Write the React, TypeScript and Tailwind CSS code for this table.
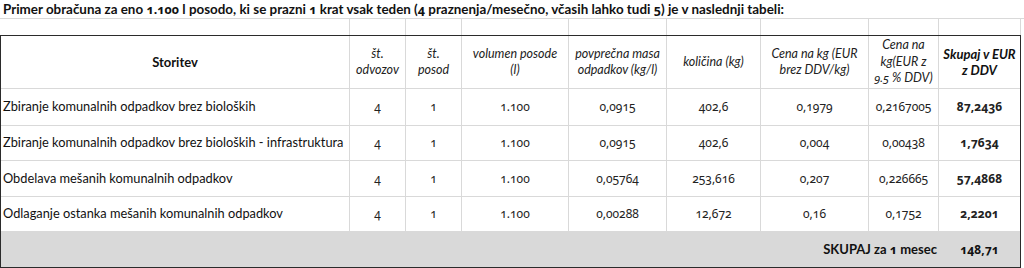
import React from 'react';

const cols = 'grid-cols-[349px_56px_56px_107px_98px_94px_108px_70px_81px]';

const rows = [
  {
    name: 'Zbiranje komunalnih odpadkov brez bioloških',
    odvozov: '4',
    posod: '1',
    volumen: '1.100',
    masa: '0,0915',
    kolicina: '402,6',
    cena: '0,1979',
    cenaDdv: '0,2167005',
    skupaj: '87,2436',
    h: 'h-[37px]',
  },
  {
    name: 'Zbiranje komunalnih odpadkov brez bioloških - infrastruktura',
    odvozov: '4',
    posod: '1',
    volumen: '1.100',
    masa: '0,0915',
    kolicina: '402,6',
    cena: '0,004',
    cenaDdv: '0,00438',
    skupaj: '1,7634',
    h: 'h-[35px]',
  },
  {
    name: 'Obdelava mešanih komunalnih odpadkov',
    odvozov: '4',
    posod: '1',
    volumen: '1.100',
    masa: '0,05764',
    kolicina: '253,616',
    cena: '0,207',
    cenaDdv: '0,226665',
    skupaj: '57,4868',
    h: 'h-[36px]',
  },
  {
    name: 'Odlaganje ostanka mešanih komunalnih odpadkov',
    odvozov: '4',
    posod: '1',
    volumen: '1.100',
    masa: '0,00288',
    kolicina: '12,672',
    cena: '0,16',
    cenaDdv: '0,1752',
    skupaj: '2,2201',
    h: 'h-[35px]',
  },
];

const cell = 'flex items-center justify-center text-center border-r border-b border-[#d9d9d9]';
// old-style figures like the spreadsheet font
const numCell = `${cell} font-['Noto_Sans',sans-serif] text-[12px] oldstyle-nums text-[#222]`;

function Num({ children }: { children: React.ReactNode }) {
  return <span className="font-['Noto_Sans',sans-serif] text-[12.5px] oldstyle-nums">{children}</span>;
}

export default function App() {
  return (
    <div className="w-[1024px] h-[268px] bg-white font-['Lato','Noto_Sans',sans-serif] text-[#111] overflow-hidden">
      {/* title row */}
      <div className="h-[19px] border-b border-[#d9d9d9] pl-[3px] font-bold text-[13.4px] leading-[18px] whitespace-nowrap">
        Primer obračuna za eno <Num>1.100</Num> l posodo, ki se prazni <Num>1</Num> krat vsak teden (<Num>4</Num> praznenja/mesečno, včasih lahko tudi <Num>5</Num>) je v naslednji tabeli:
      </div>

      {/* empty spreadsheet row */}
      <div className={`grid ${cols} w-[1021px] h-[16px] border-l border-white border-r border-r-[#d9d9d9]`}>
        {Array.from({ length: 9 }).map((_, i) => (
          <div key={i} className={i < 8 ? 'border-r border-[#d9d9d9]' : ''} />
        ))}
      </div>

      {/* table */}
      <div className="w-[1021px] border border-[#2b2b2b]">
        <div className={`grid ${cols} h-[53px] text-[12.5px] leading-[16.5px] italic text-[#222]`}>
          <div className={`${cell} not-italic font-bold text-[13px] text-[#111]`}>Storitev</div>
          <div className={cell}>št.<br />odvozov</div>
          <div className={cell}>št.<br />posod</div>
          <div className={cell}>volumen posode<br />(l)</div>
          <div className={cell}>povprečna masa<br />odpadkov (kg/l)</div>
          <div className={cell}>količina (kg)</div>
          <div className={cell}>Cena na kg (EUR<br />brez DDV/kg)</div>
          <div className={cell}>
            <div>
              Cena na<br />kg(EUR z<br />
              <span className="font-['Noto_Sans',sans-serif] text-[11.5px] oldstyle-nums">9.5</span> % DDV)
            </div>
          </div>
          <div className={`${cell} border-r-0 font-bold text-[13px] text-[#111]`}>Skupaj v EUR<br />z DDV</div>
        </div>

        {rows.map((r) => (
          <div key={r.name} className={`grid ${cols} ${r.h}`}>
            <div className="flex items-center pl-[2px] border-r border-b border-[#d9d9d9] text-[12.8px] whitespace-nowrap">
              {r.name}
            </div>
            <div className={numCell}>{r.odvozov}</div>
            <div className={numCell}>{r.posod}</div>
            <div className={numCell}>{r.volumen}</div>
            <div className={numCell}>{r.masa}</div>
            <div className={numCell}>{r.kolicina}</div>
            <div className={numCell}>{r.cena}</div>
            <div className={numCell}>{r.cenaDdv}</div>
            <div className={`${numCell} border-r-0 font-bold text-[#111]`}>{r.skupaj}</div>
          </div>
        ))}

        <div className={`grid ${cols} h-[35px] bg-[#d9d9d9] font-bold text-[13px]`}>
          <div className="col-span-8 flex items-center justify-end pr-[2px] whitespace-nowrap">
            <span>SKUPAJ za <Num>1</Num> mesec</span>
          </div>
          <div className="flex items-center justify-center font-['Noto_Sans',sans-serif] text-[12px] oldstyle-nums">148,71</div>
        </div>
      </div>
    </div>
  );
}
